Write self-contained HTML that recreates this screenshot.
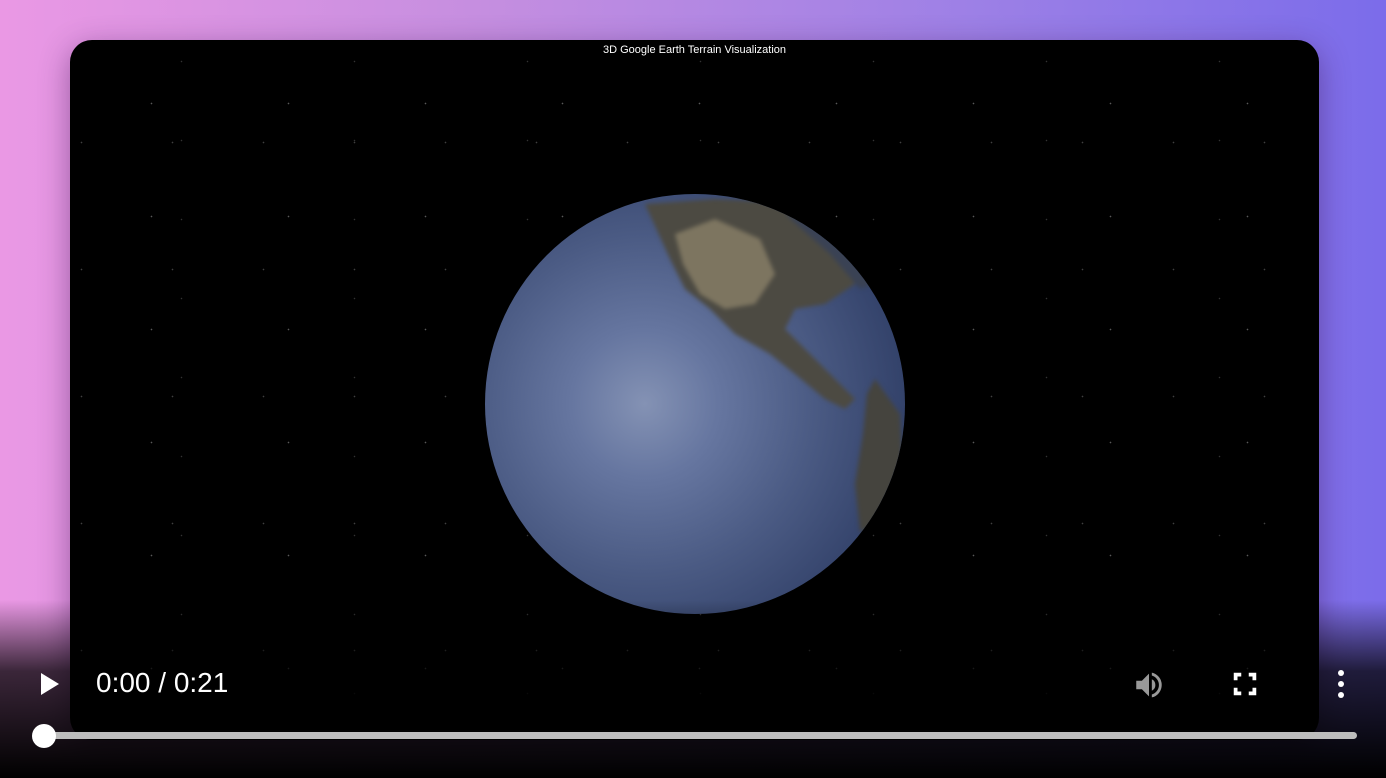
<!DOCTYPE html>
<html><head><meta charset="utf-8"><style>
html,body{margin:0;padding:0;width:1386px;height:778px;overflow:hidden;}
body{background:linear-gradient(90deg,#ea98e4 0%,#c58ee0 35%,#9d80e6 70%,#7b6cea 100%);position:relative;font-family:"Liberation Sans",sans-serif;}
.card{position:absolute;left:70px;top:40px;width:1249px;height:700px;background:#000;border-radius:22px;overflow:hidden;box-shadow:0 8px 30px rgba(60,20,80,.45);}
.stars{position:absolute;inset:0;
background-image:
radial-gradient(circle,rgba(255,255,255,.35) 0.6px,transparent 1px),
radial-gradient(circle,rgba(255,255,255,.25) 0.6px,transparent 1px),
radial-gradient(circle,rgba(255,255,255,.2) 0.5px,transparent 1px);
background-size:137px 113px,91px 127px,173px 79px;
background-position:13px 7px,57px 39px,25px 61px;}
.title{position:absolute;top:4px;left:0;width:100%;text-align:center;color:#fff;font-size:11px;}
.globe{position:absolute;left:415px;top:154px;width:420px;height:420px;border-radius:50%;
background:radial-gradient(circle at 38% 50%,#8492b4 0%,#6676a0 22%,#4b5b84 50%,#33426a 78%,#1c2744 100%);overflow:hidden;}
.ov{position:absolute;left:0;right:0;top:600px;bottom:0;background:linear-gradient(180deg,rgba(0,0,0,0),rgba(0,0,0,.75) 40%,#000 100%);}
.time{position:absolute;left:96px;top:667px;color:#fff;font-size:28px;}
.bar{position:absolute;left:44px;top:732px;width:1313px;height:7px;background:#bdbdbd;border-radius:4px;}
.knob{position:absolute;left:32px;top:724px;width:24px;height:24px;border-radius:50%;background:#fff;}
</style></head><body>
<div class="card">
<div class="stars"></div>
<div class="title">3D Google Earth Terrain Visualization</div>
<div class="globe">
<svg width="420" height="420" style="position:absolute;left:0;top:0;filter:blur(2px)">
<path d="M160 10 L230 5 L300 8 L350 50 L370 90 L340 110 L310 115 L300 135 L315 150 L335 170 L350 185 L370 205 L360 215 L340 205 L310 180 L285 160 L250 140 L225 115 L200 95 L185 65 Z" fill="#4c4a42"/>
<path d="M190 40 L230 25 L275 45 L290 80 L270 110 L240 115 L215 100 L198 70 Z" fill="#7d7560"/>
<path d="M390 185 L415 220 L418 280 L395 330 L375 338 L370 290 L378 240 L382 200 Z" fill="#45443e"/>
<path d="M300 20 L360 40 L390 90 L375 95 L345 60 Z" fill="#3a4254"/>
</svg>
</div>
</div>
<div class="ov"></div>
<svg style="position:absolute;left:38px;top:672px" width="24" height="24" viewBox="0 0 24 24"><path d="M3 1 L21 12 L3 23 Z" fill="#fff"/></svg>
<div class="time">0:00 / 0:21</div>
<svg style="position:absolute;left:1132px;top:668px" width="34" height="34" viewBox="0 0 24 24"><path fill="#999" d="M3 9v6h4l5 5V4L7 9H3zm13.5 3A4.5 4.5 0 0 0 14 7.970v8.05A4.5 4.5 0 0 0 16.5 12zM14 3.23v2.06a7 7 0 0 1 0 13.42v2.06A9 9 0 0 0 14 3.23z"/></svg>
<svg style="position:absolute;left:1230px;top:669px" width="30" height="30" viewBox="0 0 24 24"><path fill="#fff" d="M3 3h6v3H6v3H3zM15 3h6v6h-3V6h-3zM3 15h3v3h3v3H3zM18 15h3v6h-6v-3h3z"/></svg>
<svg style="position:absolute;left:1330px;top:668px" width="22" height="32" viewBox="0 0 22 32"><circle cx="11" cy="5" r="3" fill="#fff"/><circle cx="11" cy="16" r="3" fill="#fff"/><circle cx="11" cy="27" r="3" fill="#fff"/></svg>
<div class="bar"></div><div class="knob"></div>
</body></html>
